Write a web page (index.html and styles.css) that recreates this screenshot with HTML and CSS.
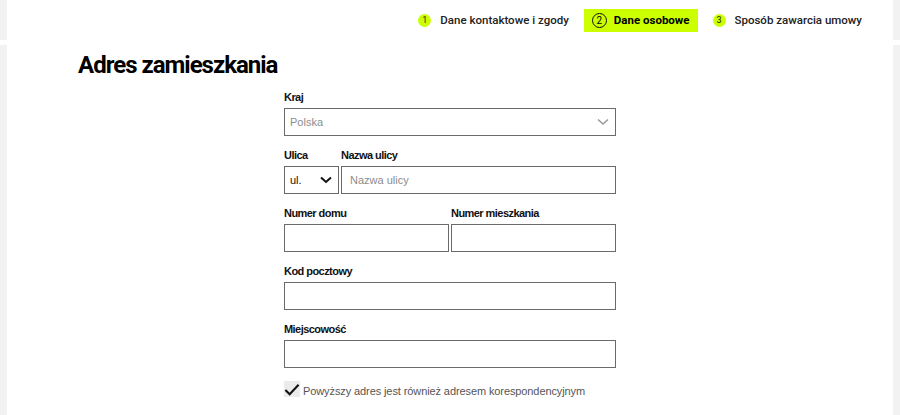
FILE: index.html
```html
<!DOCTYPE html>
<html lang="pl">
<head>
<meta charset="utf-8">
<title>Adres zamieszkania</title>
<link rel="stylesheet" href="styles.css">
</head>
<body>
<header class="topbar">
  <nav class="steps">
    <div class="step"><span class="num">1</span><span class="step-label">Dane kontaktowe i zgody</span></div>
    <div class="step active"><span class="num">2</span><span class="step-label">Dane osobowe</span></div>
    <div class="step"><span class="num">3</span><span class="step-label">Sposób zawarcia umowy</span></div>
  </nav>
</header>
<main class="panel">
  <h1 class="title">Adres zamieszkania</h1>
  <form class="form">
    <div class="field">
      <label class="label">Kraj</label>
      <div class="box select">
        <span class="value muted">Polska</span>
        <svg class="chev light" width="12" height="8" viewBox="0 0 12 8"><path d="M1 1.5 L6 6 L11 1.5" fill="none" stroke="#9a9a9a" stroke-width="1.6"/></svg>
      </div>
    </div>
    <div class="row street">
      <div class="field">
        <label class="label">Ulica</label>
        <div class="box select">
          <span class="value">ul.</span>
          <svg class="chev" width="12" height="8" viewBox="0 0 12 8"><path d="M1 1.5 L6 6 L11 1.5" fill="none" stroke="#111" stroke-width="2"/></svg>
        </div>
      </div>
      <div class="field">
        <label class="label">Nazwa ulicy</label>
        <div class="box"><span class="value placeholder">Nazwa ulicy</span></div>
      </div>
    </div>
    <div class="row half">
      <div class="field">
        <label class="label">Numer domu</label>
        <div class="box"></div>
      </div>
      <div class="field">
        <label class="label">Numer mieszkania</label>
        <div class="box"></div>
      </div>
    </div>
    <div class="field">
      <label class="label">Kod pocztowy</label>
      <div class="box"></div>
    </div>
    <div class="field">
      <label class="label">Miejscowość</label>
      <div class="box"></div>
    </div>
    <div class="check">
      <span class="checkbox">
        <svg width="17" height="14" viewBox="0 0 17 14"><path d="M1.5 7 L6 11.5 L15.5 1.5" fill="none" stroke="#111" stroke-width="2.2"/></svg>
      </span>
      <span class="check-label">Powyższy adres jest również adresem korespondencyjnym</span>
    </div>
  </form>
</main>
</body>
</html>
```
FILE: styles.css
```css
html, body {
  margin: 0;
  padding: 0;
  background: #ffffff;
}
body {
  font-family: "Liberation Sans", Arial, sans-serif;
  color: #111;
}
.topbar {
  height: 40px;
  border-left: 7px solid #f2f2f2;
  border-right: 7px solid #f2f2f2;
  display: flex;
  justify-content: flex-end;
  align-items: center;
  margin-bottom: 5px;
}
.steps {
  display: flex;
  align-items: center;
  gap: 15px;
  padding-right: 31px;
}
.step {
  display: flex;
  align-items: center;
  height: 23px;
  font-family: Roboto, "Noto Sans", sans-serif;
  font-weight: 500;
  font-size: 11.5px;
  color: #222;
}
.step .num {
  width: 13px;
  height: 13px;
  border-radius: 50%;
  background: #ccff00;
  font-size: 9px;
  font-weight: 400;
  display: flex;
  align-items: center;
  justify-content: center;
  margin-right: 9px;
  box-sizing: border-box;
}
.step.active {
  background: #ccff00;
  font-weight: 700;
  color: #000;
  padding: 0 8px;
}
.step.active .num {
  background: transparent;
  border: 1px solid #111;
  width: 15px;
  height: 15px;
  font-size: 10px;
  margin-right: 7px;
}
.panel {
  border-left: 7px solid #f2f2f2;
  border-right: 7px solid #f2f2f2;
  min-height: 370px;
  box-sizing: border-box;
  padding-top: 5px;
}
.title {
  margin: 0 0 10px 71px;
  font-family: Roboto, "Noto Sans", sans-serif;
  font-weight: 700;
  font-size: 24px;
  letter-spacing: -1px;
  line-height: 31px;
  color: #000;
}
.form {
  width: 332px;
  margin: 0 auto;
  display: flex;
  flex-direction: column;
  gap: 13px;
}
.field {
  display: flex;
  flex-direction: column;
}
.label {
  font-size: 11px;
  font-weight: 700;
  letter-spacing: -0.55px;
  line-height: 13px;
  margin-bottom: 4px;
  color: #111;
}
.box {
  height: 28px;
  border: 1px solid #6a6a6a;
  box-sizing: border-box;
  display: flex;
  align-items: center;
  padding: 0 5px;
  background: #fff;
}
.select {
  justify-content: space-between;
  padding-right: 6px;
}
.value {
  font-size: 11px;
  color: #111;
}
.muted, .placeholder {
  color: #8d8d8d;
}
.placeholder {
  padding-left: 3px;
}
.row {
  display: grid;
  gap: 2px;
}
.street {
  grid-template-columns: 55px 1fr;
}
.half {
  grid-template-columns: 1fr 1fr;
}
.check {
  display: flex;
  align-items: center;
  gap: 3px;
  margin-top: -1px;
}
.checkbox {
  width: 16px;
  height: 16px;
  background: #ebebeb;
  display: flex;
  align-items: flex-end;
  justify-content: flex-start;
}
.check-label {
  font-size: 11px;
  letter-spacing: -0.1px;
  color: #555;
  padding-top: 5px;
}
```
